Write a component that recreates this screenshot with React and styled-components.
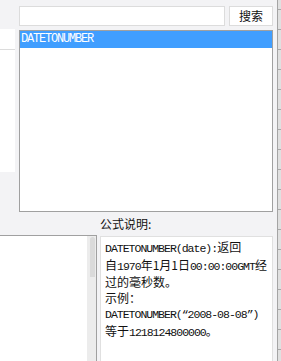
import styled, { createGlobalStyle } from "styled-components";

const GlobalStyle = createGlobalStyle`
  body {
    margin: 0;
    background: #f3f3f5;
    overflow: hidden;
    font-family: "Noto Sans CJK SC", "Noto Sans", sans-serif;
    color: #111;
  }
`

const Frame = styled.div`
  width: 281px;
  height: 361px;
  display: flex;
  overflow: hidden;
`
const Main = styled.div`
  width: 277px;
  display: flex;
  flex-direction: column;
  padding-top: 6px;
`
const RulerStrip = styled.div`
  width: 3px;
  height: 361px;
  border-left: 1px solid #a4a4a4;
  background: repeating-linear-gradient(
    to bottom,
    #e0e0e0 0,
    #e0e0e0 19px,
    #a8a8a8 19px,
    #a8a8a8 20px
  );
  background-position: 0 -10px;
`
const Top = styled.div`
  display: flex;
  align-items: flex-start;
`
const SidePane = styled.div`
  width: 15px;
  height: 143px;
  margin-top: 23px;
  background: #fff;
`
const SideHeader = styled.div`
  height: 20px;
  border-bottom: 1px solid #dcdcdc;
`
const RightCol = styled.div`
  width: 254px;
  margin-left: 4px;
  display: flex;
  flex-direction: column;
  gap: 4px;
`
const SearchRow = styled.div`
  display: flex;
  gap: 4px;
`
const SearchInput = styled.input`
  box-sizing: border-box;
  width: 206px;
  height: 20px;
  border: 1px solid #dcdcdc;
  background: #fff;
  padding: 0 3px;
  &:focus {
    outline: none;
  }
`
const SearchButton = styled.button`
  box-sizing: border-box;
  width: 44px;
  height: 20px;
  border: 1px solid #dcdcdc;
  background: #fff;
  padding: 0;
  font-family: "Noto Sans CJK SC", sans-serif;
  font-size: 12px;
  line-height: 18px;
  color: #111;
`
const List = styled.div`
  box-sizing: border-box;
  height: 182px;
  border: 1px solid #a0a0a0;
  background: #fff;
`
const ListItem = styled.div`
  height: 17px;
  line-height: 17px;
  padding-left: 1px;
  font-family: "Liberation Mono", monospace;
  font-size: 12px;
  letter-spacing: -1.2px;
  background: ${(p) => (p.$selected ? "#409eff" : "transparent")};
  color: ${(p) => (p.$selected ? "#fff" : "#111")};
`
const Bottom = styled.div`
  display: grid;
  grid-template-columns: 97px 173px;
  grid-template-rows: 23px 130px;
  column-gap: 3px;
`
const Label = styled.div`
  grid-column: 2;
  font-size: 12px;
  line-height: 23px;
`
const LeftPanel = styled.div`
  grid-column: 1;
  display: flex;
  justify-content: flex-end;
  background: #fff;
  border-top: 1px solid #a0a0a0;
  border-right: 1px solid #a0a0a0;
`
const ScrollTrack = styled.div`
  width: 9px;
  background: #ececec;
  padding-top: 1px;
`
const ScrollThumb = styled.div`
  height: 40px;
  margin: 0 1px 0 3px;
  border-radius: 3px 3px 0 0;
  background: #dadada;
`
const DescBox = styled.div`
  grid-column: 2;
  margin-top: 1px;
  background: #fff;
  border: 1px solid #e0e0e0;
  padding: 2px 4px;
  font-size: 12px;
  line-height: 15.5px;
  white-space: nowrap;
`
const Code = styled.span`
  font-family: "Liberation Mono", monospace;
  font-size: 11.5px;
  letter-spacing: -1px;
`

export default function App() {
  return (
    <>
      <GlobalStyle />
      <Frame>
        <Main>
          <Top>
            <SidePane>
              <SideHeader />
            </SidePane>
            <RightCol>
              <SearchRow>
                <SearchInput />
                <SearchButton>搜索</SearchButton>
              </SearchRow>
              <List>
                <ListItem $selected>DATETONUMBER</ListItem>
              </List>
            </RightCol>
          </Top>
          <Bottom>
            <Label>公式说明:</Label>
            <LeftPanel>
              <ScrollTrack>
                <ScrollThumb />
              </ScrollTrack>
            </LeftPanel>
            <DescBox>
              <Code>DATETONUMBER(date):</Code>返回
              <br />
              自<Code>1970</Code>年1月1日<Code>00:00:00GMT</Code>经
              <br />
              过的毫秒数。
              <br />
              示例：
              <br />
              <Code>DATETONUMBER(“2008-08-08”)</Code>
              <br />
              等于<Code>1218124800000</Code>。
            </DescBox>
          </Bottom>
        </Main>
        <RulerStrip />
      </Frame>
    </>
  );
}
